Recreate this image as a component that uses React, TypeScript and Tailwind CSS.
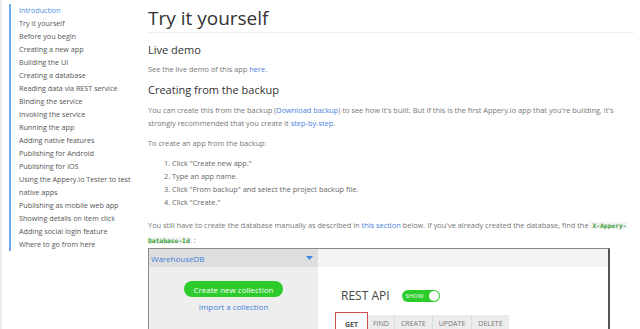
export default function App() {
  const nav = [
    "Introduction",
    "Try it yourself",
    "Before you begin",
    "Creating a new app",
    "Building the UI",
    "Creating a database",
    "Reading data via REST service",
    "Binding the service",
    "Invoking the service",
    "Running the app",
    "Adding native features",
    "Publishing for Android",
    "Publishing for iOS",
    "Using the Appery.io Tester to test native apps",
    "Publishing as mobile web app",
    "Showing details on item click",
    "Adding social login feature",
    "Where to go from here",
  ];

  return (
    <div className="flex h-[329px] w-[640px] overflow-hidden bg-white font-['Open_Sans',sans-serif]">
      <div className="w-[2px] shrink-0 bg-[#ececec]" />
      <aside className="w-[146px] shrink-0 pl-[7px] pt-[4px]">
        <ul className="w-[129px] border-l-2 border-[#6ea8f2] pl-[8px] text-[7.2px] leading-[13px] text-[#555]">
          {nav.map((item, i) => (
            <li key={item} className={i === 0 ? "text-[#4a8ee6]" : ""}>
              {item}
            </li>
          ))}
        </ul>
      </aside>

      <main className="w-[486px] shrink-0 pt-[6px] text-[7.4px] leading-[13px] text-[#777]">
        <h1 className="text-[19px] leading-[24px] text-[#333]">Try it yourself</h1>
        <hr className="mt-[2px] border-[#eee]" />

        <h2 className="mt-[10px] text-[11px] leading-[14px] text-[#333]">Live demo</h2>
        <p className="mt-[6px]">
          See the live demo of this app <a className="text-[#4a7fe0]">here</a>.
        </p>

        <h2 className="mt-[7px] text-[11px] leading-[14px] text-[#333]">Creating from the backup</h2>
        <p className="mt-[7px] w-[474px]">
          You can create this from the backup (<a className="text-[#4a7fe0]">Download backup</a>) to see how
          it's built. But if this is the first Appery.io app that you're building, it's strongly recommended
          that you create it <a className="text-[#4a7fe0]">step-by-step</a>.
        </p>
        <p className="mt-[7px]">To create an app from the backup:</p>
        <ol className="mt-[6px] list-decimal pl-[24px] leading-[13px] text-[#666]">
          <li className="pt-[1px]">Click "Create new app."</li>
          <li>Type an app name.</li>
          <li>Click "From backup" and select the project backup file.</li>
          <li>Click "Create."</li>
        </ol>

        <p className="mt-[9px] w-[480px] leading-[14px]">
          You still have to create the database manually as described in{" "}
          <a className="text-[#4a7fe0]">this section</a> below. If you've already created the database, find
          the{" "}
          <code className="bg-[#f3f3f3] px-[2px] font-['DejaVu_Sans_Mono',monospace] text-[6.3px] font-bold text-[#3aa03a]">
            X-Appery-Database-Id
          </code>{" "}
          :
        </p>

        <div className="w-[462px] border border-r-2 border-[#8a8a8a] border-r-[#555]">
          <div className="flex h-[18px]">
            <div className="flex w-[169px] items-center justify-between bg-[#dedede] pl-[2px] pr-[5px] text-[#3f7fd9]">
              <span className="text-[8px]">WarehouseDB</span>
              <svg width="7" height="4" viewBox="0 0 7 4">
                <path d="M0 0h7L3.5 4z" fill="#3f8fe0" />
              </svg>
            </div>
            <div className="flex-1 bg-[#f4f4f4]" />
          </div>
          <div className="flex h-[70px]">
            <div className="flex w-[169px] flex-col items-center border-b border-[#aaa] bg-[#eee] pt-[14px]">
              <div className="flex h-[16px] w-[99px] items-center justify-center rounded-full bg-[#2bcc2b] text-[8px] text-white">
                Create new collection
              </div>
              <div className="mt-[4px] text-[8px] leading-[12px] text-[#3f7fd9]">Import a collection</div>
            </div>
            <div className="flex-1 pl-[17px] pt-[21px]">
              <div className="ml-[6px] flex items-center">
                <span className="text-[12px] leading-[16px] text-[#444]">REST API</span>
                <div className="ml-[12px] flex h-[12px] w-[38px] items-center justify-between rounded-full bg-[#2bcc2b] pl-[4px] pr-[1px]">
                  <span className="text-[6px] leading-none text-white">SHOW</span>
                  <span className="h-[10px] w-[10px] rounded-full bg-white" />
                </div>
              </div>
              <div className="mt-[8px] flex text-[7px] text-[#777]">
                <div className="flex h-[20px] w-[33px] items-start justify-center border border-[#d04a4a] bg-white pt-[5px] font-bold text-[#555]">
                  GET
                </div>
                <div className="mt-[3px] flex h-[17px] bg-[#ececec]">
                  <span className="border-r border-[#ddd] px-[5px] pt-[2px]">FIND</span>
                  <span className="border-r border-[#ddd] px-[6px] pt-[2px]">CREATE</span>
                  <span className="border-r border-[#ddd] px-[6px] pt-[2px]">UPDATE</span>
                  <span className="px-[6px] pt-[2px]">DELETE</span>
                </div>
              </div>
            </div>
          </div>
        </div>
      </main>
    </div>
  );
}
